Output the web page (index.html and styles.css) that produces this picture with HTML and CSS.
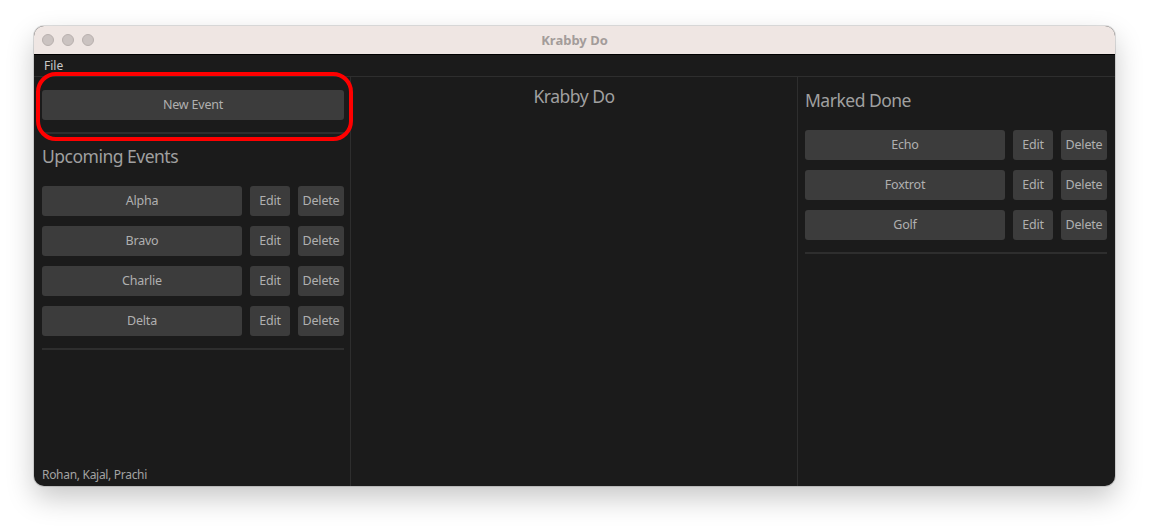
FILE: index.html
```html
<!DOCTYPE html>
<html>
<head>
<meta charset="utf-8">
<link rel="stylesheet" href="styles.css">
</head>
<body>
<div class="window">
  <div class="titlebar">
    <div class="lights"><span class="light"></span><span class="light"></span><span class="light"></span></div>
    <div class="title">Krabby Do</div>
  </div>
  <div class="menubar"><span class="menu-item">File</span></div>
  <div class="main">
    <div class="panel left">
      <button class="btn btn-new">New Event</button>
      <div class="sep sep-top"></div>
      <h2 class="heading">Upcoming Events</h2>
      <div class="rows">
        <div class="row"><button class="btn btn-name">Alpha</button><button class="btn btn-edit">Edit</button><button class="btn btn-del">Delete</button></div>
        <div class="row"><button class="btn btn-name">Bravo</button><button class="btn btn-edit">Edit</button><button class="btn btn-del">Delete</button></div>
        <div class="row"><button class="btn btn-name">Charlie</button><button class="btn btn-edit">Edit</button><button class="btn btn-del">Delete</button></div>
        <div class="row"><button class="btn btn-name">Delta</button><button class="btn btn-edit">Edit</button><button class="btn btn-del">Delete</button></div>
      </div>
      <div class="sep sep-list"></div>
      <div class="spacer"></div>
      <div class="footer">Rohan, Kajal, Prachi</div>
    </div>
    <div class="panel middle">
      <h1 class="center-title">Krabby Do</h1>
    </div>
    <div class="panel right">
      <h2 class="heading heading-right">Marked Done</h2>
      <div class="rows">
        <div class="row"><button class="btn btn-name">Echo</button><button class="btn btn-edit">Edit</button><button class="btn btn-del">Delete</button></div>
        <div class="row"><button class="btn btn-name">Foxtrot</button><button class="btn btn-edit">Edit</button><button class="btn btn-del">Delete</button></div>
        <div class="row"><button class="btn btn-name">Golf</button><button class="btn btn-edit">Edit</button><button class="btn btn-del">Delete</button></div>
      </div>
      <div class="sep sep-list"></div>
    </div>
  </div>
  <div class="highlight"></div>
</div>
</body>
</html>
```
FILE: styles.css
```css
* { box-sizing: border-box; }
html, body { margin: 0; padding: 0; background: #ffffff; }
body {
  font-family: "Noto Sans", "Open Sans", sans-serif;
  width: 1149px;
  height: 528px;
  overflow: hidden;
}
.window {
  position: relative;
  margin: 26px 0 0 34px;
  width: 1081px;
  height: 460px;
  border-radius: 10px;
  background: #1b1b1b;
  box-shadow: 0 12px 28px rgba(0,0,0,0.22), 0 0 0 1px rgba(0,0,0,0.12);
  display: flex;
  flex-direction: column;
  overflow: hidden;
}
.titlebar {
  height: 29px;
  flex: none;
  background: #efe6e3;
  border-bottom: 1px solid #000;
  display: flex;
  align-items: center;
  position: relative;
}
.lights { display: flex; gap: 8px; padding-left: 8px; }
.light {
  width: 12px; height: 12px; border-radius: 50%;
  background: #cbc3c1; border: 1px solid #b8b0ae;
}
.title {
  position: absolute; left: 0; right: 0; top: 0; bottom: 0;
  display: flex; align-items: center; justify-content: center;
  font-size: 13px; font-weight: bold; color: #a39c9a;
}
.menubar {
  height: 22px; flex: none;
  border-bottom: 1px solid #2e2e2e;
  display: flex; align-items: center;
  padding-left: 10px;
}
.menu-item { font-size: 12px; color: #c8c8c8; }
.main { flex: 1; display: flex; min-height: 0; }
.panel { display: flex; flex-direction: column; }
.left {
  width: 317px; flex: none;
  border-right: 1px solid #2e2e2e;
  padding: 13px 6px 2px 8px;
}
.middle {
  flex: 1;
  border-right: 1px solid #2e2e2e;
  align-items: center;
}
.right {
  width: 317px; flex: none;
  padding: 0 8px 0 7px;
}
.btn {
  border: none; outline: none;
  background: #3c3c3c;
  color: #b0b0b0;
  font-family: inherit;
  font-size: 12.5px;
  letter-spacing: -0.2px;
  height: 30px;
  border-radius: 3px;
  padding: 0 0 2px 0;
  display: flex; align-items: center; justify-content: center;
}
.btn-new { width: 100%; }
.sep { height: 2px; background: #2e2e2e; flex: none; }
.sep-top { margin-top: 12px; }
.heading {
  margin: 9px 0 0 0;
  font-size: 17.5px; font-weight: normal; color: #a0a0a0;
  letter-spacing: -0.5px;
  line-height: 26px; height: 26px;
}
.heading-right { margin-top: 10px; }
.rows { display: flex; flex-direction: column; gap: 10px; margin-top: 17px; }
.heading-right + .rows { margin-top: 17px; }
.row { display: flex; gap: 8px; }
.btn-name { width: 200px; }
.btn-edit { width: 40px; }
.btn-del { width: 46px; }
.sep-list { margin-top: 12px; }
.spacer { flex: 1; }
.footer { font-size: 12px; letter-spacing: -0.3px; color: #a3a3a3; line-height: 18px; }
.center-title {
  margin: 6px 0 0 0;
  font-size: 17.5px; font-weight: normal; color: #a0a0a0;
  letter-spacing: -0.5px;
  line-height: 26px;
}
.highlight {
  position: absolute;
  left: 2px; top: 46px;
  width: 317px; height: 69px;
  border: 4px solid #ff0000;
  border-radius: 20px;
  pointer-events: none;
}
```
